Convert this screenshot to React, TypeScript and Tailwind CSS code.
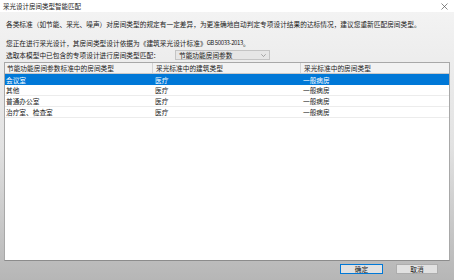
import React from "react";

const rows = [
  ["会议室", "医疗", "一般病房"],
  ["其他", "医疗", "一般病房"],
  ["普通办公室", "医疗", "一般病房"],
  ["治疗室、检查室", "医疗", "一般病房"],
];

export default function App() {
  return (
    <div
      className="w-[454px] h-[280px] flex flex-col overflow-hidden text-[#1a1a1a]"
      style={{ fontFamily: '"Noto Sans CJK SC", "Noto Sans", sans-serif' }}
    >
      <div className="h-[12px] bg-white flex items-center justify-between pl-[3px] pr-[6px] shrink-0">
        <span className="text-[6.5px] leading-none">采光设计房间类型智能匹配</span>
        <svg width="7" height="7" viewBox="0 0 7 7" className="text-[#555]">
          <path d="M0.5 0.5 L6.5 6.5 M6.5 0.5 L0.5 6.5" stroke="currentColor" strokeWidth="0.7" />
        </svg>
      </div>
      <div className="flex-1 flex flex-col bg-gradient-to-b from-[#f3f3f3] via-[#e2e2e2] to-[#b6b6b6]">
        <div className="mt-[7px] h-[10px] pl-[6px] flex items-center text-[6.7px] leading-none whitespace-nowrap">
          各类标准（如节能、采光、噪声）对房间类型的规定有一定差异，为更准确地自动判定专项设计结果的达标情况，建议您重新匹配房间类型。
        </div>
        <div className="mt-[9px] h-[10px] pl-[6px] flex items-center text-[6.7px] leading-none whitespace-nowrap">
          <span>您正在进行采光设计，其房间类型设计依据为《建筑采光设计标准》</span>
          <span className="text-[6px] tracking-[-0.4px]">GB 50033-2013</span>
          <span>。</span>
        </div>
        <div className="mt-[2px] h-[10px] pl-[6px] flex items-center text-[6.7px] leading-none whitespace-nowrap">
          <span className="w-[169px]">选取本模型中已包含的专项设计进行房间类型匹配：</span>
          <div className="w-[95px] h-[10px] bg-[#e6e6e6] border border-[#c4c4c4] flex items-center justify-between pl-[3px] pr-[3px]">
            <span>节能功能房间参数</span>
            <svg width="5" height="3" viewBox="0 0 5 3">
              <path d="M0.3 0.3 L2.5 2.5 L4.7 0.3" stroke="#777" strokeWidth="0.6" fill="none" />
            </svg>
          </div>
        </div>
        <div className="mt-[2px] ml-[4px] w-[446px] h-[199px] bg-white border border-[#a8a8a8] border-b-[#8c8c8c] flex flex-col text-[6.7px] leading-none">
          <div className="h-[11px] flex bg-[#f2f2f2] border-b border-[#c9c9c9] shrink-0">
            <div className="w-[148px] border-r border-[#d4d4d4] pl-[2px] flex items-center">节能功能房间参数标准中的房间类型</div>
            <div className="w-[148px] border-r border-[#d4d4d4] pl-[3px] flex items-center">采光标准中的建筑类型</div>
            <div className="flex-1 pl-[3px] flex items-center">采光标准中的房间类型</div>
          </div>
          {rows.map((r, i) => (
            <div
              key={i}
              className={
                i === 0
                  ? "h-[11px] flex bg-[#0078d7] text-white border-t border-[#0078d7]"
                  : "h-[11px] flex border-b border-[#ececec]"
              }
            >
              <div className="w-[148px] pl-[1px] flex items-center">{r[0]}</div>
              <div className="w-[148px] pl-[2px] flex items-center">{r[1]}</div>
              <div className="flex-1 pl-[2px] flex items-center">{r[2]}</div>
            </div>
          ))}
        </div>
        <div className="mt-[3px] flex justify-end pr-[16px] gap-[13px] text-[6.7px] leading-none">
          <div className="w-[43px] h-[10px] bg-[#e1e1e1] border border-[#0078d7] flex items-center justify-center">确定</div>
          <div className="w-[42px] h-[10px] bg-[#e1e1e1] border border-[#adadad] flex items-center justify-center">取消</div>
        </div>
      </div>
    </div>
  );
}
